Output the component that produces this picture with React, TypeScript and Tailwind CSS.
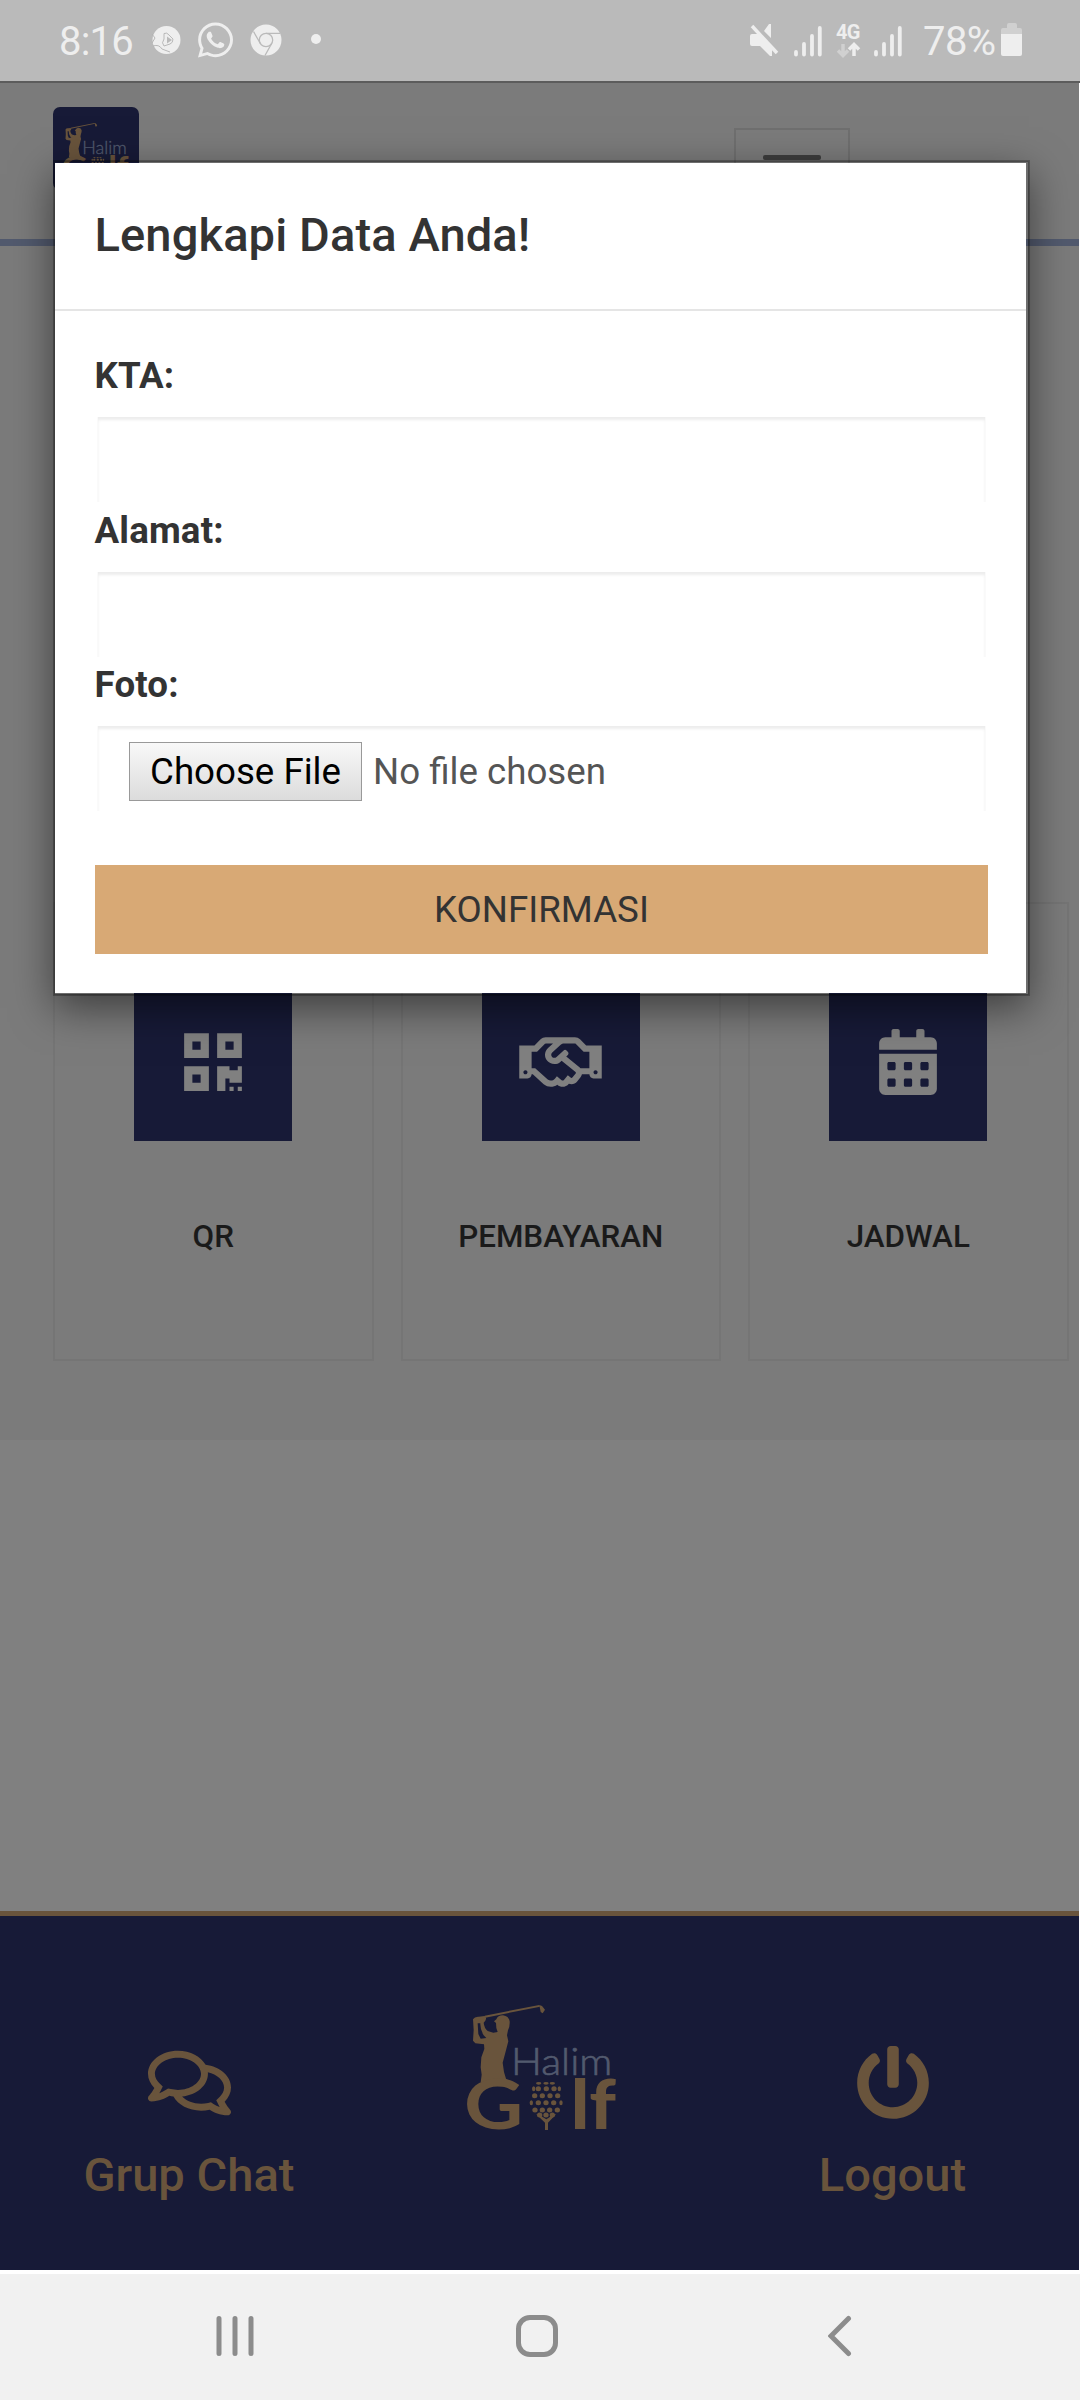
import React from "react";
import { FaQrcode, FaRegHandshake, FaCalendarAlt, FaRegComments, FaPowerOff, FaWhatsapp } from "react-icons/fa";

const BALL_ROWS: [number, number[]][] = [
  [310, [296, 318, 337]],
  [326, [281, 295, 319, 342, 358]],
  [347, [284, 307, 330, 353]],
  [368, [274, 295, 318, 341, 363]],
  [390, [285, 307, 329, 352]],
  [405, [299, 318, 337]],
];

function GolfLogo({ className }: { className: string }) {
  return (
    <svg viewBox="0 0 600 510" className={className} fill="#69543c">
      <path d="M134 107 L298 75 L300 80 L136 113Z" />
      <path d="M298 75 L306 78 L315 89 L308 100 L302 96Z" />
      <path d="M99 118 Q104 109 116 110 L134 108 Q141 113 136 122 L131 128 Q133 145 143 153 L160 158 L173 156 L169 144 L168 129 L162 124 L169 118 Q173 106 189 106 Q206 108 209 124 Q210 140 204 151 L201 166 L205 184 L196 218 L188 248 L192 276 L198 296 L214 307 L122 307 L125 284 L122 262 L124 232 L133 207 L132 193 L106 190 L99 182 L101 150Z" />
      <path d="M113 130 L121 130 Q120 147 131 166 L139 174 L122 176 L115 162Z" fill="#171a37" />
      <text x="72" y="447" textLength="178" lengthAdjust="spacingAndGlyphs" fontFamily="Lato, sans-serif" fontWeight="700" fontSize="204">G</text>
      {BALL_ROWS.map(([y, xs]) => xs.map((x) => <ellipse key={`${x}-${y}`} cx={x} cy={y} rx={x < 282 || x > 357 ? 5 : 8} ry={y === 310 ? 4 : 7.5} />))}
      <path d="M288 402 L303 408 L319 418 L334 408 L349 402 L324 428 L324 450 L315 450 L315 428Z" />
      <text x="392" y="447" textLength="136" lengthAdjust="spacingAndGlyphs" fontFamily="Lato, sans-serif" fontWeight="900" fontSize="208">lf</text>
      <text x="213" y="285" textLength="304" lengthAdjust="spacingAndGlyphs" fontFamily="Lato, sans-serif" fontWeight="300" fontSize="114" fill="#525a6e" stroke="#525a6e" strokeWidth="2">Halim</text>
    </svg>
  );
}

function Signal() {
  return (
    <svg viewBox="0 0 28 32" className="h-8 w-7" stroke="#eee" strokeWidth="3.8" strokeLinecap="round">
      <path d="M2 27V29.5M10 19V29.5M18 11V29.5M25.8 3V29.5" />
    </svg>
  );
}

function StatusBar() {
  return (
    <div className="flex h-[83px] shrink-0 items-start border-b-2 border-[#5c5c5c] bg-[#bababa] pl-[59px] text-[#eee]">
      <span className="mt-[18px] w-[76px] text-[40px] leading-[48px] tracking-[-0.8px]">8:16</span>
      <svg viewBox="0 0 30 30" className="ml-[16px] mt-[25px] h-[30px] w-[30px]">
        <circle cx="15.500" cy="15" r="14" fill="#eee" />
        <path d="M1 9L4 13L1 18M2 21Q8 19 11 24L19 27M13 8.500Q16 7 18 10L22 14Q22 18 19 19L13 21Q10 18 13 14Z" fill="none" stroke="#b2b2b2" strokeWidth="0.9" />
        <path d="M16 11.500L21 15L16 18.500Z" fill="#bababa" />
      </svg>
      <FaWhatsapp className="ml-[17px] mt-[20px] h-[40px] w-[35px]" />
      <svg viewBox="0 0 32 32" className="ml-[17px] mt-[24px] h-8 w-8">
        <circle cx="16" cy="16" r="15.500" fill="#eee" />
        <g fill="none" stroke="#bababa" strokeWidth="1.300">
          <circle cx="16" cy="16" r="6.700" />
          <path d="M16 9.300H30M10.200 19.300L3.500 7.500M21.800 19.300L15 31.500" />
        </g>
      </svg>
      <span className="ml-[29px] mt-[34px] h-[10px] w-[10px] rounded-full bg-[#eee]" />
      <svg viewBox="0 0 32 34" className="ml-[428px] mt-[23px] h-[34px] w-8" fill="#eee">
        <path d="M3 11H9L23 25V33H21L11 23H3Q1 23 1 21V13Q1 11 3 11ZM22 1V15L15 8L20 1Z" />
        <path d="M3 3L28 30" stroke="#eee" strokeWidth="3.500" />
      </svg>
      <div className="ml-[13px] mt-[25px]"><Signal /></div>
      <div className="ml-[14px] mt-[22px] w-[25px]">
        <div className="text-[20px] font-bold leading-[20px] tracking-[-0.8px]">4G</div>
        <svg viewBox="0 0 25 16" className="h-4 w-[25px]" fill="none" strokeWidth="3.500">
          <path d="M7 2V13M2 8.500L7 13.500L12 8.500" stroke="#d0d0d0" />
          <path d="M18 14V3M13 7.500L18 2.500L23 7.500" stroke="#eee" />
        </svg>
      </div>
      <div className="ml-[13px] mt-[25px]"><Signal /></div>
      <span className="ml-[21px] mt-[18px] w-[76px] text-[40px] leading-[48px] tracking-[-0.6px]">78%</span>
      <svg viewBox="0 0 22 34" className="ml-[2px] mt-[23px] h-[34px] w-[22px]">
        <path d="M6 2Q6 0 8 0H14Q16 0 16 2V5H19Q21 5 21 7V12H0V7Q0 5 2 5H6Z" fill="#d0d0d0" />
        <path d="M0 11H21V31Q21 33 19 33H2Q0 33 0 31Z" fill="#eee" />
      </svg>
    </div>
  );
}

function Card({ label, children }: { label: string; children: React.ReactNode }) {
  return (
    <div className="flex h-[459px] w-[320.500px] shrink-0 flex-col items-center border-2 border-[#757575] pt-[79px]">
      <div className="flex h-[158px] w-[158px] shrink-0 items-center justify-center bg-[#171a37] text-[66px] text-[#808080]">{children}</div>
      <div className="mt-[74px] text-[31.400px] font-medium leading-[44px] text-[#1a1a1a]">{label}</div>
    </div>
  );
}

function Field({ label, children }: { label: string; children?: React.ReactNode }) {
  return (
    <div className="h-[154.500px]">
      <div className="-ml-[0.5px] h-[52px] text-[36.700px] font-bold leading-[52px] tracking-[0.15px] text-[#333]">{label}</div>
      <div className="mx-[2px] mt-[15px] flex h-[85px] items-start border-x border-[#fafafa] pl-[31px] pt-[16px] shadow-[inset_0_3px_3px_rgba(0,0,0,0.075)]">
        {children}
      </div>
    </div>
  );
}

function Modal() {
  return (
    <div className="absolute left-[54px] top-[161px] w-[975px] border-y-2 border-l border-r-3 border-black/10 bg-white bg-clip-padding shadow-[0_0_0_1px_rgba(0,0,0,0.25),0_13px_39px_rgba(0,0,0,0.5)]">
      <h4 className="h-[148px] border-b-2 border-[#e5e5e5] pl-[39.500px] pt-[39px] text-[47.100px] font-medium leading-[65px] tracking-[0.1px] text-[#333]">Lengkapi Data Anda!</h4>
      <div className="h-[682px] pl-10 pr-[38px] pt-[39px]">
        <Field label="KTA:" />
        <Field label="Alamat:" />
        <Field label="Foto:">
          <button className="h-[59px] w-[233px] shrink-0 whitespace-nowrap border border-[#999] bg-linear-to-b from-[#f8f8f8] to-[#dcdcdc] text-[36.700px] leading-[57px] text-black">Choose File</button>
          <span className="ml-[11px] text-[36.700px] leading-[59px] text-[#555]">No file chosen</span>
        </Field>
        <button className="mt-[51.500px] block h-[89px] w-full bg-[#d8a975] text-[36.700px] leading-[89px] text-[#333]">KONFIRMASI</button>
      </div>
    </div>
  );
}

export default function App() {
  return (
    <div className="relative flex h-[2400px] w-[1080px] flex-col overflow-hidden bg-white font-[Roboto,sans-serif]">
      <StatusBar />
      <div className="flex h-[2187px] w-[1079px] shrink-0 flex-col overflow-hidden bg-[#808080]">
        <header className="flex h-[163px] shrink-0 items-start border-b-[7px] border-[#525a6e] bg-[#7b7b7b] pl-[53px]">
          <div className="mt-6 h-[83px] w-[86px] overflow-hidden rounded-[7px] bg-[#171a37]">
            <GolfLogo className="-ml-[2px] mt-[5px] h-[75px] w-[88px]" />
          </div>
          <div className="ml-[595px] mt-[45px] flex h-[89px] w-[116px] justify-center border-2 border-[#6f6f6f] pt-[25px]">
            <div className="h-[5px] w-[58px] rounded-[2px] bg-[#3e3e3e]" />
          </div>
        </header>
        <main className="flex h-[1194px] shrink-0 gap-[27px] bg-[#7b7b7b] pl-[53px] pt-[656px]">
          <Card label="QR"><FaQrcode /></Card>
          <Card label="PEMBAYARAN"><FaRegHandshake className="h-[66px] w-[83px]" /></Card>
          <Card label="JADWAL"><FaCalendarAlt /></Card>
        </main>
        <footer className="mt-auto flex h-[359px] shrink-0 items-start border-t-[5px] border-[#69543c] bg-[#171a37] text-[47.100px] font-medium leading-[66px] text-[#69543c]">
          <div className="flex w-[378px] flex-col items-center pt-[130px]">
            <FaRegComments className="h-[74px] w-[83px]" />
            <span className="mt-[22px]">Grup Chat</span>
          </div>
          <div className="w-[322px] pl-[62px] pt-[64px]"><GolfLogo className="h-[170px] w-[200px]" /></div>
          <div className="flex w-[379px] flex-col items-center pl-[6px] pt-[130px]">
            <FaPowerOff className="h-[74px] w-[74px]" />
            <span className="mt-[22px]">Logout</span>
          </div>
        </footer>
      </div>
      <nav className="mt-1 flex h-[126px] shrink-0 items-start bg-[#f1f1f1] pl-[216px] pt-[41px]">
        <svg viewBox="0 0 38 42" className="h-[42px] w-[38px]" stroke="#8c8c8c" strokeWidth="5" strokeLinecap="round"><path d="M3 3.500V38.500M19 3.500V38.500M35 3.500V38.500" /></svg>
        <div className="ml-[262px] h-[42px] w-[42px] rounded-[14px] border-5 border-[#8c8c8c]" />
        <svg viewBox="0 0 24 42" className="ml-[270px] h-[42px] w-6" fill="none" stroke="#8c8c8c" strokeWidth="5" strokeLinecap="round"><path d="M20.500 3.500L3 21L20.500 38.500" /></svg>
      </nav>
      <Modal />
    </div>
  );
}
